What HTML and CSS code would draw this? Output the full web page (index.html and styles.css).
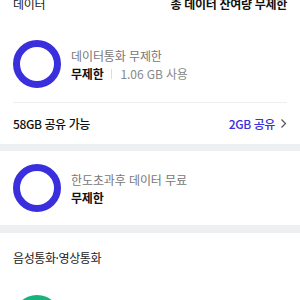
FILE: index.html
```html
<!DOCTYPE html>
<html lang="ko">
<head>
<meta charset="utf-8">
<link rel="stylesheet" href="styles.css">
</head>
<body>
  <section class="card">
    <div class="header">
      <span class="header-title">데이터</span>
      <span class="header-total">총 데이터 잔여량 무제한</span>
    </div>
    <div class="usage">
      <div class="ring"></div>
      <div class="usage-text">
        <div class="usage-label">데이터통화 무제한</div>
        <div class="usage-value"><b>무제한</b><span class="sep"></span><span class="used">1.06 GB 사용</span></div>
      </div>
    </div>
    <div class="share">
      <span class="share-avail">58GB 공유 가능</span>
      <span class="share-link">2GB 공유
        <svg class="chev" width="7" height="11" viewBox="0 0 7 11"><path d="M1.5 1.5 L5.5 5.5 L1.5 9.5" fill="none" stroke="#555" stroke-width="1.2"/></svg>
      </span>
    </div>
  </section>
  <div class="band"></div>
  <section class="card">
    <div class="usage usage-second">
      <div class="ring"></div>
      <div class="usage-text">
        <div class="usage-label">한도초과후 데이터 무료</div>
        <div class="usage-value"><b>무제한</b></div>
      </div>
    </div>
  </section>
  <div class="band band-second"></div>
  <section class="card">
    <div class="section-title">음성통화·영상통화</div>
    <div class="usage usage-voice">
      <div class="ring ring-green"></div>
    </div>
  </section>
</body>
</html>
```
FILE: styles.css
```css
html, body {
  margin: 0;
  padding: 0;
  background: #ffffff;
  overflow: hidden;
}
body {
  width: 300px;
  height: 300px;
  font-family: "Noto Sans CJK KR", "Noto Sans", sans-serif;
  color: #111;
}
.card {
  padding: 0 13px;
}
.header {
  display: flex;
  justify-content: space-between;
  align-items: center;
  height: 20px;
  margin-top: -7px;
  font-size: 12px;
  letter-spacing: -0.3px;
}
.header-title {
  color: #222;
}
.header-total {
  font-weight: 700;
  color: #111;
}
.usage {
  display: flex;
  align-items: center;
  gap: 10px;
  margin-top: 27px;
  height: 48px;
}
.ring {
  width: 48px;
  height: 48px;
  box-sizing: border-box;
  border: 7px solid #3a2fdc;
  border-radius: 50%;
  flex: none;
}
.ring-green {
  border: none;
  background: #15b47d;
}
.usage-text {
  display: flex;
  flex-direction: column;
  gap: 1px;
  margin-top: 1px;
}
.usage-label {
  font-size: 12px;
  line-height: 17px;
  color: #777;
  letter-spacing: -0.1px;
}
.usage-value {
  display: flex;
  align-items: center;
  line-height: 17px;
  font-size: 12px;
  letter-spacing: -0.1px;
}
.usage-value b {
  font-weight: 700;
  color: #111;
  letter-spacing: -0.2px;
}
.sep {
  width: 1px;
  height: 10px;
  background: #ddd;
  margin: 0 9px 0 7px;
}
.used {
  color: #888;
}
.share {
  display: flex;
  justify-content: space-between;
  align-items: center;
  border-top: 1px solid #eeeeee;
  margin-top: 14px;
  height: 41px;
  font-size: 12px;
  letter-spacing: -0.4px;
}
.share-avail {
  color: #111;
  font-weight: 500;
}
.share-link {
  display: flex;
  align-items: center;
  gap: 5px;
  color: #3a2fdc;
  font-weight: 500;
}
.band {
  height: 7px;
  background: #eeeff1;
}
.usage-second {
  margin-top: 13px;
}
.band-second {
  margin-top: 13px;
  height: 8px;
}
.section-title {
  font-size: 12px;
  line-height: 17px;
  margin-top: 16px;
  color: #222;
  letter-spacing: -0.4px;
}
.usage-voice {
  margin-top: 29px;
}
```
